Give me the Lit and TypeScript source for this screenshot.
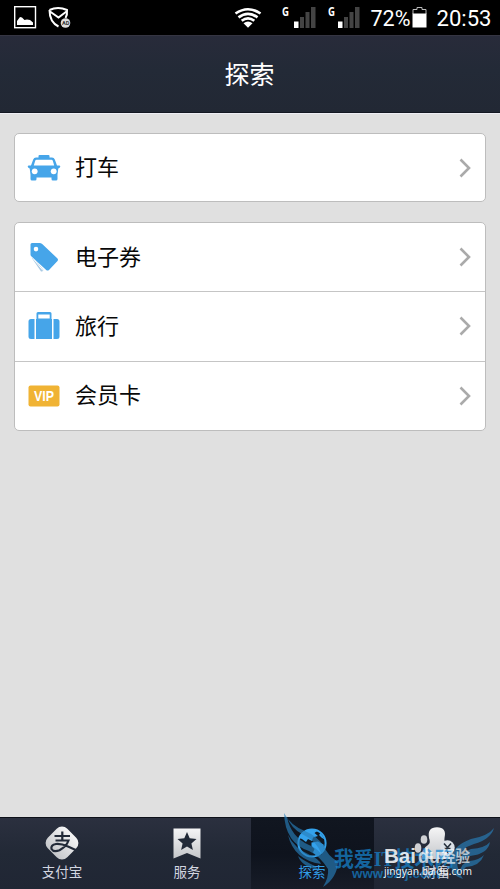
import { LitElement, html, css, svg } from "lit";
import { customElement, property } from "lit/decorators.js";

const icons: Record<string, unknown> = {
  taxi: html`<svg width="34" height="28" viewBox="0 0 34 28">
    <path fill="#46a5e9" fill-rule="evenodd" d="M11.5 3.5V2Q11.500 1 12.500 1H21.500Q22.500 1 22.500 2V3.500H25Q27 3.500 27.800 5.500L30 11.500H32Q33.500 11.500 33.300 12.600Q33 14 31.300 14.500L30.500 20.500V25Q30.500 26.500 29 26.500H25.800Q24.500 26.500 24.500 25V23.500H9.500V25Q9.500 26.500 8.200 26.500H5Q3.500 26.500 3.500 25V20.500L2.700 14.500Q1 14 .7 12.600Q.5 11.500 2 11.500H4L6.200 5.500Q7 3.500 9 3.500ZM9.500 5.700Q8.600 5.700 8.200 6.800L6.800 11.500H27.200L25.800 6.800Q25.400 5.700 24.500 5.700Z"/>
    <circle cx="7.700" cy="17.300" r="2.900" fill="#fff"/><circle cx="26.700" cy="17.300" r="2.900" fill="#fff"/>
  </svg>`,
  tag: html`<svg width="34" height="32" viewBox="0 0 34 32">
    <path fill="#a9c9e2" d="M4.500 16.500L14 30.500Q15.500 31 16.500 29L10 21Z"/>
    <path d="M6.500 18L16 29.500" stroke="#fff" stroke-width="1"/>
    <path fill="#46a5e9" fill-rule="evenodd" d="M5 2H12.500Q14 2 15.200 3L30.500 17.500Q31.500 18.800 30.500 20L22 29Q20.500 30 19.200 29L4 15Q3.500 14.300 3.500 13.500V3.500Q3.500 2 5 2ZM9 5.800A2.300 2.300 0 1 0 9 10.400A2.300 2.300 0 1 0 9 5.800Z"/>
  </svg>`,
  bag: html`<svg width="34" height="30" viewBox="0 0 34 30">
    <g fill="#46a5e9"><path d="M7.500 8V28H4Q1.500 28 1.500 25.500V10.500Q1.500 8 4 8ZM26.500 8H30Q32.500 8 32.500 10.500V25.500Q32.500 28 30 28H26.500Z"/>
    <path fill-rule="evenodd" d="M9 8H9.500V2.500Q9.500 1 11 1H23Q24.500 1 24.500 2.500V8H25V28H9ZM11.300 3.500V7.500H22.700V3.500Z"/></g>
  </svg>`,
  vip: html`<svg width="34" height="24" viewBox="0 0 34 24">
    <rect x="1.500" y="1.500" width="31" height="21" rx="2" fill="#f0b334"/>
    <text x="17" y="17" text-anchor="middle" textLength="20" lengthAdjust="spacingAndGlyphs" font-family="Liberation Sans, sans-serif" font-weight="bold" font-size="14" fill="#fff">VIP</text>
  </svg>`,
  alipay: html`<svg width="36" height="36" viewBox="0 0 36 36">
    <rect x="4.200" y="4.200" width="27.600" height="27.600" rx="7.500" transform="rotate(45 18 18)" fill="url(#silver)"/>
    <g fill="none" stroke="#222a38" stroke-width="2.200"><path d="M10.500 11H26M18.300 6.500V15.400M11.500 15.500H24.500Q22.500 21.500 15.500 25.200Q9.500 27.500 7.500 24Q6.500 20 12 19Q17 18.500 24 21.500L35 26.500"/></g>
  </svg>`,
  service: html`<svg width="36" height="36" viewBox="0 0 36 36">
    <path fill="url(#silver)" d="M4.500 3.500H31.500V33.500L18 28L4.500 33.500Z"/>
    <path fill="#222a38" d="M18 7L20.700 13.300L27.500 13.900L22.400 18.400L23.900 25L18 21.500L12.100 25L13.600 18.400L8.500 13.900L15.300 13.300Z"/>
  </svg>`,
  globe: html`<svg width="36" height="36" viewBox="0 0 36 36">
    <circle cx="18" cy="18" r="13.600" fill="#111923" stroke="#34a2ec" stroke-width="2"/>
    <path fill="#34a2ec" d="M5 13Q8 5 16 4.200L24 5.500L20.500 8L24 11L19 12.500L18 16L14 14L12 17L8 14ZM17.500 17.500L24 16.500L29.500 19.500L30 23Q27 29 22.500 30.500L19 27.500L20.500 24L17.500 21ZM26.500 8L31 14.500L28 13L25 10Z"/>
  </svg>`,
  wealth: html`<svg width="42" height="36" viewBox="0 0 42 36">
    <path fill="url(#silver)" d="M13 13Q11 2.500 21 2.300Q31 2.500 28.500 13Q27.500 18 32 20L34 34H6Q5 24 12 20Q15 18 13 13Z"/>
    <circle cx="31.500" cy="22.500" r="7.200" fill="#dce1e7"/>
    <path d="M28 18.500L31.500 22.500L35 18.500M31.500 22.500V28M28.500 23.500H34.500" fill="none" stroke="#26303d" stroke-width="1.500"/>
  </svg>`,
};

@customElement("menu-row")
class MenuRow extends LitElement {
  @property() icon = "";
  @property() label = "";
  static styles = css`
    :host { display: flex; align-items: center; flex: 1; padding: 0 14px 0 12px; font-size: 22px; color: #080808; }
    .icon { display: flex; width: 34px; height: 34px; align-items: center; justify-content: center; }
    .label { flex: 1; margin-left: 14px; line-height: 30px; padding-top: 1px; }
    svg { display: block; }
  `;
  render() {
    return html`<span class="icon">${icons[this.icon]}</span><span class="label">${this.label}</span>
      <svg width="12" height="20" viewBox="0 0 12 20"><path d="M1.500 1.500L10 10L1.500 18.500" fill="none" stroke="#aaa" stroke-width="2.600"/></svg>`;
  }
}

@customElement("tab-item")
class TabItem extends LitElement {
  @property() icon = "";
  @property() label = "";
  static styles = css`
    :host { display: flex; flex-direction: column; align-items: center; padding-top: 7px; padding-right: 1px; font-size: 13.500px; color: #d2d6e0; box-sizing: border-box; }
    svg { display: block; }
    .defs { width: 0; height: 0; }
    .label { line-height: 20px; margin-top: 1px; }
  `;
  render() {
    return html`<svg class="defs"><defs><linearGradient id="silver" x1="0" y1="0" x2="0" y2="1"><stop stop-color="#f5f5f6"/><stop offset="1" stop-color="#c5c7ca"/></linearGradient></defs></svg>
      ${icons[this.icon]}<span class="label">${this.label}</span>`;
  }
}

@customElement("app-root")
class AppRoot extends LitElement {
  static styles = css`
    :host { display: flex; flex-direction: column; width: 500px; height: 889px; overflow: hidden; background: #e0e0e0; font-family: Roboto, "Noto Sans CJK SC", sans-serif; }
    .status { height: 35px; background: #000; }
    .status svg { display: block; }
    .header { height: 78px; box-sizing: border-box; display: flex; align-items: center; justify-content: center; color: #fff; font-size: 25px; padding-bottom: 2px; padding-right: 1px; background: linear-gradient(#282b3a, #232a37 45%, #222834); border-top: 1px solid #353542; border-bottom: 1px solid #141822; }
    .content { flex: 1; display: flex; flex-direction: column; gap: 20px; padding: 19px 14px 0; border-top: 1px solid #eeeef4; }
    .card { display: flex; flex-direction: column; box-sizing: border-box; height: 69px; border: 1px solid #bdbdbd; border-radius: 5px; background: #fff; }
    .tall { height: 209px; }
    .tall menu-row + menu-row { border-top: 1px solid #c5c5c5; }
    .tabs { position: relative; box-sizing: border-box; height: 72px; display: grid; grid-template-columns: 125px 125px 124px 126px; border-top: 1px solid #0d1119; background: linear-gradient(#2b303f, #222936 50%, #202634); }
    .active { background: linear-gradient(#111620, #0e131d 50%, #171c28); color: #329de7; margin-left: 1px; }
    .mark { position: absolute; left: 0; bottom: 0; pointer-events: none; }
  `;
  private signal(labelX: number, x: number) {
    return svg`<text x=${labelX} y="16" font-family="Noto Sans, sans-serif" font-size="12" font-weight="bold" fill="#fff" textLength="7" lengthAdjust="spacingAndGlyphs">G</text>
      <path fill="#444" d=${`M${x + 6} 17h4v11h-4zM${x + 11.5} 12h4v16h-4zM${x + 17} 7h4.500v21h-4.500z`}/><rect x=${x} y="21.500" width="4.500" height="6.500" fill="#fff"/>`;
  }
  render() {
    return html`
      <div class="status"><svg width="500" height="35" viewBox="0 0 500 35">
        <rect x="14.700" y="6.700" width="20.800" height="21" fill="none" stroke="#fff" stroke-width="1.400"/>
        <path fill="#fff" d="M17 25V21L20 17L22 17.500L24.500 20L27 19.500L30 20L33 22.500V25Z"/>
        <path d="M49.500 10Q58 6 67 10Q67.500 15 65.500 18M49.500 10Q49.500 22 58.500 26.500M50 11.500L58.500 17.500L66.500 11.500" fill="none" stroke="#fff" stroke-width="2"/>
        <circle cx="65.500" cy="23" r="4.800" fill="#ddd"/><text x="62" y="25.300" font-size="6" font-weight="bold" textLength="7.500" lengthAdjust="spacingAndGlyphs" fill="#333">AD</text>
        <g fill="none" stroke="#fff" stroke-width="2.700"><path d="M235.500 13.500Q248 5 260.500 13.500M238.500 17.300Q248 10.300 257.500 17.300M241.700 20.800Q248 15.800 254.300 20.800"/></g><path fill="#fff" d="M243.500 23.300Q248 19.500 252.500 23.300L248 27.800Z"/>
        ${this.signal(282, 294)}${this.signal(328, 338)}
        <text x="370.500" y="26" font-size="22" fill="#fff" textLength="40" lengthAdjust="spacingAndGlyphs">72%</text>
        <path d="M413 14V9.500H417V7.500H422V9.500H426V14" fill="none" stroke="#bbb"/><rect x="412.500" y="13.500" width="14" height="14" fill="#fff"/>
        <text x="436.500" y="26" font-size="22.500" fill="#fff" textLength="55" lengthAdjust="spacingAndGlyphs">20:53</text>
      </svg></div>
      <div class="header">探索</div>
      <div class="content">
        <div class="card"><menu-row icon="taxi" label="打车"></menu-row></div>
        <div class="card tall">
          <menu-row icon="tag" label="电子券"></menu-row><menu-row icon="bag" label="旅行"></menu-row><menu-row icon="vip" label="会员卡"></menu-row>
        </div>
      </div>
      <div class="tabs">
        <tab-item icon="alipay" label="支付宝"></tab-item><tab-item icon="service" label="服务"></tab-item>
        <tab-item class="active" icon="globe" label="探索"></tab-item><tab-item icon="wealth" label="财富"></tab-item>
        <svg class="mark" width="500" height="79" viewBox="0 810 500 79">
          <g fill="#287fbb" fill-opacity=".65">
            <path d="M284 813Q291 826 305 831Q317 836 324 846Q327 855 338 862Q337 878 323 887Q329 877 328 869Q320 856 309 851Q285 843 284 813ZM287 817Q291 837 309 845Q317 848 322 855Q317 841 302 834Q291 828 287 817Z"/>
            <path d="M288 835Q294 848 310 855Q319 859 321 864Q294 860 288 835ZM298 856Q304 861 315 866L319 870Q302 867 298 856Z"/>
            <path d="M494 828Q491 839 474 844Q460 848 457 861Q457 870 463 879Q450 875 451 862Q451 846 471 839Q488 836 494 828ZM490 842Q488 854 470 856Q462 858 459 865Q459 853 471 849Q485 848 490 842ZM484 855Q480 866 466 867L460 873Q460 863 470 861Q479 860 484 855Z"/>
          </g>
          <g fill="#1684cf" font-weight="bold"><text x="334" y="866" font-family="Liberation Serif, Noto Sans CJK SC, serif" font-size="21" fill-opacity=".72" textLength="120" lengthAdjust="spacingAndGlyphs">我爱IT技术网</text>
            <text x="352" y="878" font-family="Liberation Sans, sans-serif" font-size="12" fill-opacity=".7" textLength="88" lengthAdjust="spacingAndGlyphs">www.52ij.com</text></g>
          <g fill="#fff">
            <g fill-opacity=".78"><ellipse cx="418" cy="848" rx="3.300" ry="4.700"/><ellipse cx="424" cy="839.500" rx="3.300" ry="4.300"/></g>
            <g font-family="Liberation Sans, sans-serif" font-weight="bold"><text x="384" y="863" font-size="20.500" fill-opacity=".85" textLength="32" lengthAdjust="spacingAndGlyphs">Bai</text>
            <text x="418" y="863" font-size="20" fill-opacity=".72" textLength="22" lengthAdjust="spacingAndGlyphs">du</text></g>
            <text x="441" y="862" font-size="16" font-weight="bold" fill-opacity=".68" textLength="29" lengthAdjust="spacingAndGlyphs">经验</text>
            <text x="384" y="875" font-family="Noto Sans, sans-serif" font-size="11" fill-opacity=".95" textLength="88" lengthAdjust="spacingAndGlyphs">jingyan.baidu.com</text>
          </g>
        </svg>
      </div>`;
  }
}
